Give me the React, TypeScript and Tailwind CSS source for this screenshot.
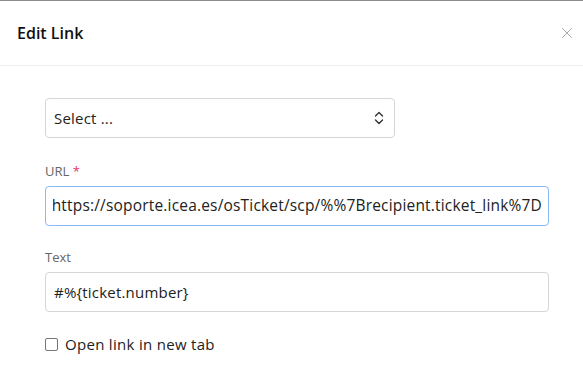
import { X } from "lucide-react";

export default function App() {
  const url = "https://soporte.icea.es/osTicket/scp/%%7Brecipient.ticket_link%7D";

  return (
    <div
      className="w-[583px] h-[384px] bg-white border-t border-[#8c8c8c] overflow-hidden text-[#222]"
      style={{ fontFamily: '"Open Sans", "Noto Sans", sans-serif' }}
    >
      {/* Header */}
      <div className="h-[65px] flex items-center justify-between pl-[17px] pr-[3px] border-b border-[#eeeeee]">
        <h2 className="text-[16px] font-semibold text-[#111]">Edit Link</h2>
        <button className="text-[#a8a8a8] p-1">
          <X size={18} strokeWidth={1.3} />
        </button>
      </div>

      {/* Body */}
      <div className="pl-[45px] pr-[35px] pt-[32px]">
        <div className="w-[350px] h-[40px] border border-[#d6d6d6] rounded-[4px] flex items-center justify-between pl-[8px] pr-[10px]">
          <span className="text-[15px] tracking-[0.2px]">Select ...</span>
          <svg width="10" height="14" viewBox="0 0 10 14" fill="none" stroke="#333" strokeWidth="1.4" strokeLinecap="round" strokeLinejoin="round">
            <path d="M1.5 5 5 1.5 8.5 5" />
            <path d="M1.5 9 5 12.5 8.5 9" />
          </svg>
        </div>

        <div className="mt-[24px] text-[13px] text-[#666] leading-[18px]">
          URL <span className="text-[#e8336d]">*</span>
        </div>
        <div className="mt-[6px] w-[504px] h-[40px] border border-[#8ab9f5] rounded-[4px] flex items-center pl-[7px] pr-[6px]">
          <div className="flex-1 flex justify-end overflow-hidden">
            <span className="text-[15.5px] tracking-[0.18px] whitespace-nowrap text-[#222]">{url}</span>
          </div>
        </div>

        <div className="mt-[22px] text-[13px] text-[#666] leading-[18px]">Text</div>
        <div className="mt-[6px] w-[504px] h-[40px] border border-[#d6d6d6] rounded-[4px] flex items-center pl-[8px]">
          <span className="text-[15px] tracking-[0.2px] text-[#222]">#%&#123;ticket.number&#125;</span>
        </div>

        <label className="mt-[21px] flex items-center gap-[7px]">
          <span className="w-[13px] h-[13px] border border-[#767676] rounded-[2px] bg-white" />
          <span className="text-[15px] tracking-[0.3px] text-[#222]">Open link in new tab</span>
        </label>
      </div>
    </div>
  );
}
